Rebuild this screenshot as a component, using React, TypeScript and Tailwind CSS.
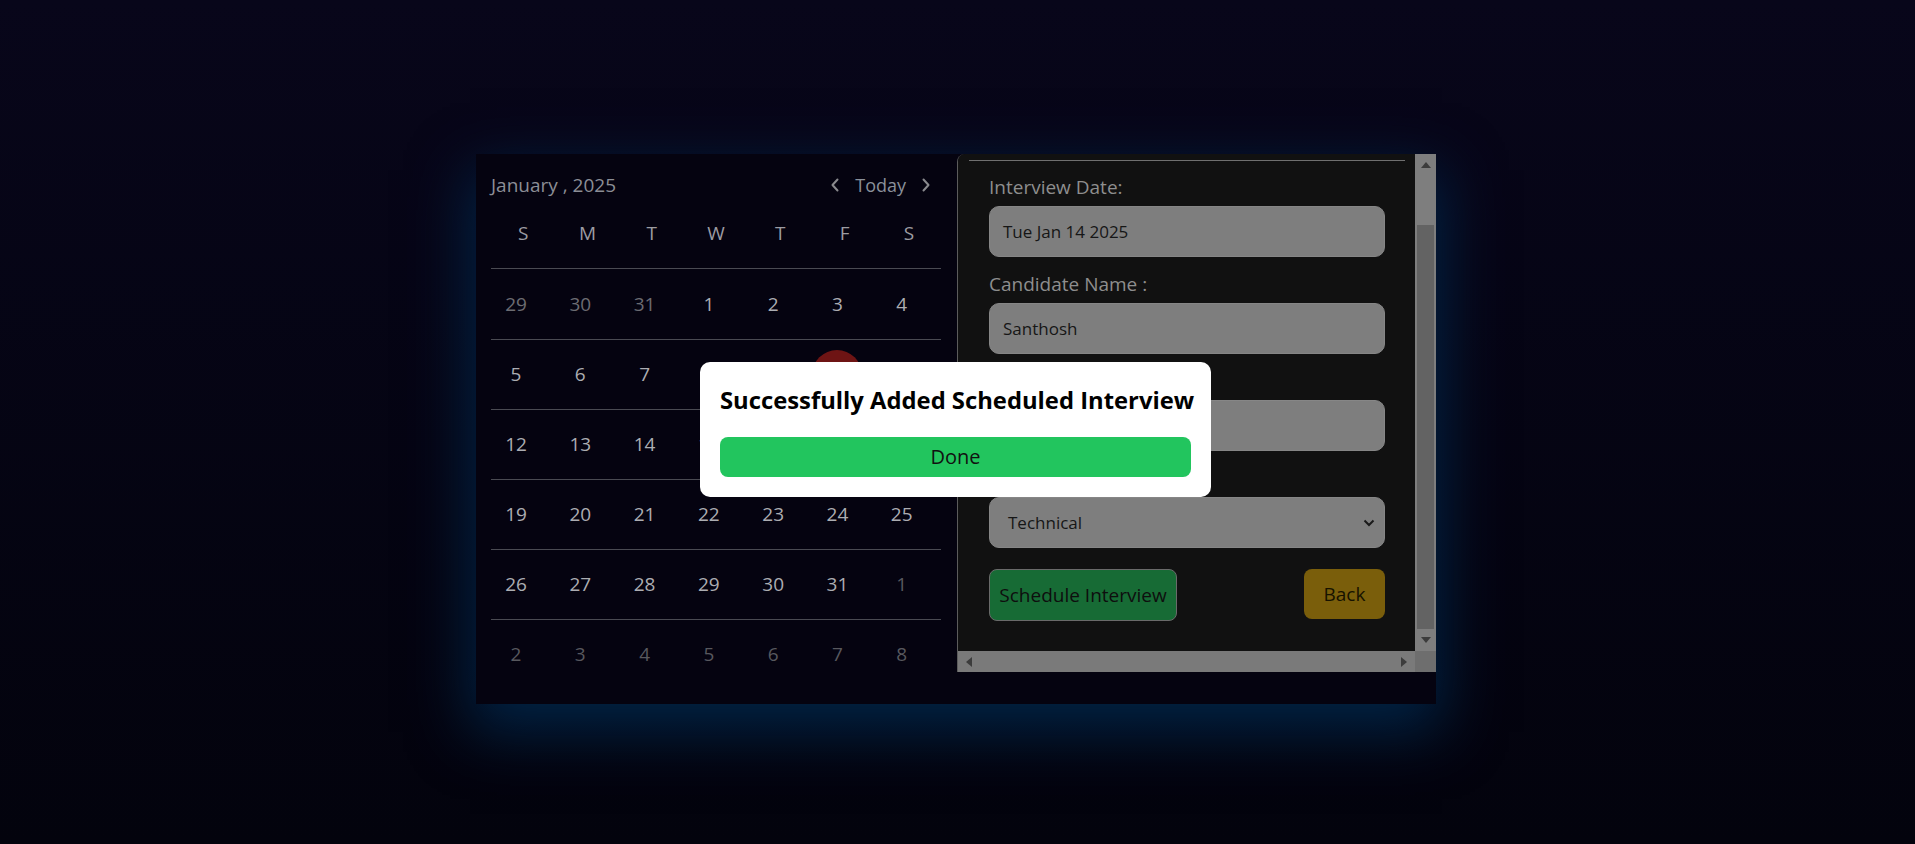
import React from 'react';

type Cell = { day: number; current: boolean };

// January 2025 grid, starting on Sunday Dec 29
const buildWeeks = (): Cell[][] => {
  const cells: Cell[] = [];
  [29, 30, 31].forEach((d) => cells.push({ day: d, current: false }));
  for (let d = 1; d <= 31; d++) cells.push({ day: d, current: true });
  for (let d = 1; d <= 8; d++) cells.push({ day: d, current: false });
  const weeks: Cell[][] = [];
  for (let i = 0; i < cells.length; i += 7) weeks.push(cells.slice(i, i + 7));
  return weeks;
};

const dayNames = ['S', 'M', 'T', 'W', 'T', 'F', 'S'];

const Chevron = ({ dir }: { dir: 'left' | 'right' }) => (
  <svg width="10" height="14" viewBox="0 0 10 14" fill="none">
    <path
      d={dir === 'left' ? 'M7.5 1.5 L2.5 7 L7.5 12.5' : 'M2.5 1.5 L7.5 7 L2.5 12.5'}
      stroke="#8a8a8e"
      strokeWidth="2"
      strokeLinecap="round"
      strokeLinejoin="round"
    />
  </svg>
);

const Calendar = () => {
  const weeks = buildWeeks();
  return (
    <div className="w-[450px] pt-[17px] pb-[15px]">
      <div className="flex items-center justify-between h-[28px] leading-[28px]">
        <span className="text-[19px] text-[#8c8e96]">January , 2025</span>
        <div className="flex items-center gap-[15px] pr-[10px]">
          <Chevron dir="left" />
          <span className="text-[18px] text-[#8a909a]">Today</span>
          <Chevron dir="right" />
        </div>
      </div>
      <div className="grid grid-cols-7 h-[70px] border-b border-[#4a4a52] items-center">
        {dayNames.map((d, i) => (
          <div key={i} className="text-center text-[19px] text-[#9c9ca2]">
            {d}
          </div>
        ))}
      </div>
      {weeks.map((week, wi) => (
        <div
          key={wi}
          className={`grid grid-cols-7 h-[70px] items-center ${wi > 0 ? 'border-t border-[#4a4a52]' : ''}`}
        >
          {week.map((c, ci) => {
            const isToday = c.current && c.day === 10;
            return (
              <div key={ci} className="flex">
                <div
                  className={`w-[50px] h-[50px] rounded-full flex items-center justify-center text-[19px] ${
                    isToday ? 'bg-[#6e1414]' : ''
                  } ${c.current ? 'text-[#acadb2]' : wi === 0 ? 'text-[#6c6c72]' : 'text-[#58585e]'}`}
                >
                  {c.day}
                </div>
              </div>
            );
          })}
        </div>
      ))}
    </div>
  );
};

const Field = ({ label, value, first }: { label: string; value: string; first?: boolean }) => (
  <div className={first ? 'mt-[12px]' : 'mt-[13px]'}>
    <div className="text-[19px] leading-[28px] text-[#8e8e8e]">{label}</div>
    <div className="mt-[5px] h-[51px] rounded-[10px] bg-[#7e7e7e] border border-[#868686] flex items-center pl-[13px] text-[17px] text-[#161616]">
      {value}
    </div>
  </div>
);

const Triangle = ({ dir }: { dir: 'up' | 'down' | 'left' | 'right' }) => {
  const pts = {
    up: '0,6 5,0 10,6',
    down: '0,0 10,0 5,6',
    left: '6,0 6,10 0,5',
    right: '0,0 0,10 6,5',
  }[dir];
  const vertical = dir === 'up' || dir === 'down';
  return (
    <svg width={vertical ? 10 : 6} height={vertical ? 6 : 10} viewBox={vertical ? '0 0 10 6' : '0 0 6 10'}>
      <polygon points={pts} fill="#3c3c3c" />
    </svg>
  );
};

const FormPanel = () => (
  <div className="ml-[16px] w-[479px] h-[518px] flex flex-col border-l border-[#5c5c5c] rounded-tl-[8px] overflow-hidden">
    <div className="flex flex-1 min-h-0">
      <div className="flex-1 bg-[#111111] pl-[11px] pr-[10px] pt-[6px]">
        <div className="border-t border-[#707070]" />
        <div className="px-[20px]">
          <Field first label="Interview Date:" value="Tue Jan 14 2025" />
          <Field label="Candidate Name :" value="Santhosh" />
          <Field label="Interviewer Name :" value="" />
          <div className="mt-[13px]">
            <div className="text-[19px] leading-[28px] text-[#8e8e8e]">Interview Type :</div>
            <div className="mt-[5px] h-[51px] rounded-[10px] bg-[#7e7e7e] border border-[#868686] flex items-center justify-between pl-[18px] pr-[9px] text-[17px] text-[#161616]">
              <span>Technical</span>
              <svg width="12" height="8" viewBox="0 0 12 8" fill="none">
                <path d="M1.5 1.5 L6 6 L10.5 1.5" stroke="#1a1a1a" strokeWidth="2" />
              </svg>
            </div>
          </div>
          <div className="mt-[21px] flex items-start justify-between">
            <button className="h-[52px] w-[188px] rounded-[8px] bg-[#176b35] border border-[#6a6a6a] text-[19px] text-[#0e0e0e]">
              Schedule Interview
            </button>
            <button className="h-[50px] w-[81px] rounded-[8px] bg-[#7a5e0b] text-[19px] text-[#161200]">
              Back
            </button>
          </div>
        </div>
      </div>
      <div className="w-[21px] bg-[#7e7e7e] flex flex-col items-center">
        <div className="h-[21px] flex items-center justify-center">
          <Triangle dir="up" />
        </div>
        <div className="mt-[50px] h-[404px] w-[17px] bg-[#636363]" />
        <div className="flex-1 flex items-center justify-center">
          <Triangle dir="down" />
        </div>
      </div>
    </div>
    <div className="flex h-[21px]">
      <div className="flex-1 bg-[#7a7a7a] flex items-center justify-between px-[8px]">
        <Triangle dir="left" />
        <Triangle dir="right" />
      </div>
      <div className="w-[21px] bg-[#6e6e6e]" />
    </div>
  </div>
);

export default function App() {
  return (
    <div
      className="h-screen w-full overflow-hidden bg-gradient-to-b from-[#08061a] to-[#03030d] flex justify-start pl-[476px] pt-[154px]"
      style={{ fontFamily: '"Open Sans", "Noto Sans", sans-serif' }}
    >
      <div className="flex items-start self-start bg-[#050310] pl-[15px] shadow-[0_22px_55px_6px_rgba(2,45,85,0.75)]">
        <Calendar />
        <FormPanel />
      </div>

      <div className="fixed inset-0 flex items-center justify-center">
        <div className="w-[511px] bg-white rounded-[10px] p-5 -translate-x-[2px] translate-y-[7px]">
          <h2 className="text-[23.8px] leading-[36px] font-bold text-black whitespace-nowrap">
            Successfully Added Scheduled Interview
          </h2>
          <button className="mt-[19px] w-full h-[40px] rounded-[8px] bg-[#22c55e] text-[20px] text-[#111]">
            Done
          </button>
        </div>
      </div>
    </div>
  );
}
